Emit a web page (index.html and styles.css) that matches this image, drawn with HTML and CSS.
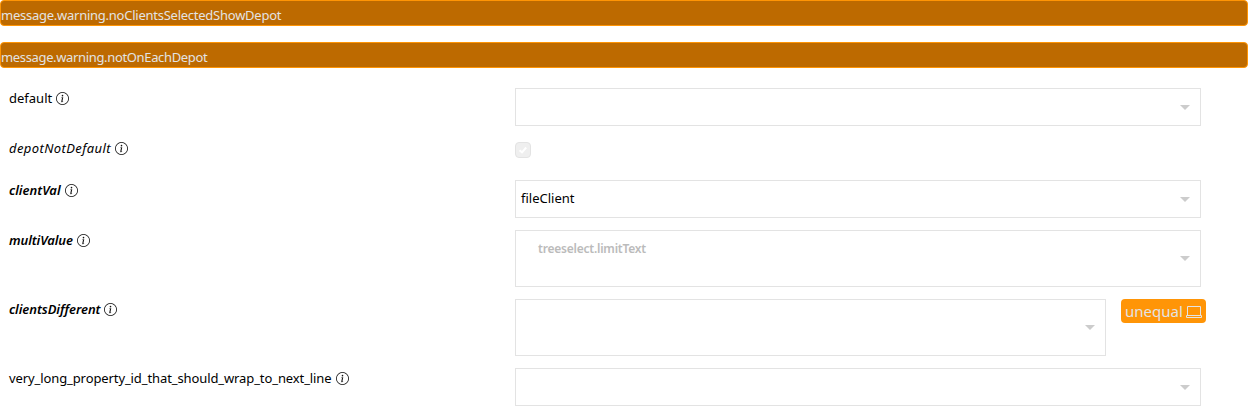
FILE: index.html
```
<!DOCTYPE html>
<html lang="en">
<head>
<meta charset="utf-8">
<title>Properties</title>
<link rel="stylesheet" href="styles.css">
</head>
<body>
<svg width="0" height="0" class="defs">
  <symbol id="info" viewBox="0 0 16 16">
    <path d="M8 15A7 7 0 1 1 8 1a7 7 0 0 1 0 14zm0 1A8 8 0 1 0 8 0a8 8 0 0 0 0 16z"/>
    <path d="m8.930 6.588-2.290.287-.082.380.450.083c.294.070.352.176.288.469l-.738 3.468c-.194.897.105 1.319.808 1.319.545 0 1.178-.252 1.465-.598l.088-.416c-.200.176-.492.246-.686.246-.275 0-.375-.193-.304-.533L8.930 6.588zM9 4.500a1 1 0 1 1-2 0 1 1 0 0 1 2 0z"/>
  </symbol>
</svg>
<div class="alert"><span class="msg-clients">message.warning.noClientsSelectedShowDepot</span></div>
<div class="alert"><span class="msg-depot">message.warning.notOnEachDepot</span></div>
<div class="table">
  <div class="row">
    <div class="label"><span class="name">default</span><svg class="info"><use href="#info"/></svg></div>
    <div class="select"><i class="arrow"></i></div>
  </div>
  <div class="row check-row">
    <div class="label"><span class="name changed">depotNotDefault</span><svg class="info"><use href="#info"/></svg></div>
    <div class="checkbox"><svg width="10" height="10" viewBox="0 0 10 10"><path d="M1.500 5.300 4 7.300 8.200 2.500"/></svg></div>
  </div>
  <div class="row">
    <div class="label"><span class="name client">clientVal</span><svg class="info"><use href="#info"/></svg></div>
    <div class="select"><span class="value">fileClient</span><i class="arrow"></i></div>
  </div>
  <div class="row">
    <div class="label"><span class="name client multi">multiValue</span><svg class="info"><use href="#info"/></svg></div>
    <div class="select tall"><span class="limit">treeselect.limitText</span><i class="arrow"></i></div>
  </div>
  <div class="row">
    <div class="label"><span class="name client different">clientsDifferent</span><svg class="info"><use href="#info"/></svg></div>
    <div class="select tall narrow"><i class="arrow"></i></div>
    <div class="badge"><span>unequal</span><svg width="16" height="14" viewBox="0 0 16 14"><path d="M1.500 10.500V1.500h13v9M.500 10.500h15v2h-15z"/></svg></div>
  </div>
  <div class="row">
    <div class="label"><span class="name long">very_long_property_id_that_should_wrap_to_next_line</span><svg class="info"><use href="#info"/></svg></div>
    <div class="select"><i class="arrow"></i></div>
  </div>
</div>
</body>
</html>
```
FILE: styles.css
```
* { box-sizing: border-box; }
body {
  margin: 0;
  overflow: hidden;
  background: #fff;
  color: #000;
  font: 13px/20px "Noto Sans", sans-serif;
}
svg { display: block; flex: none; }
.defs { display: none; }
.alert {
  height: 26px;
  margin-bottom: 16px;
  padding-top: 4px;
  border: 1px solid #ff9505;
  border-radius: 4px;
  background: #bd6a00;
  color: #e3e3e3;
  white-space: nowrap;
}
.msg-clients { letter-spacing: -0.25px; }
.msg-depot { letter-spacing: -0.35px; }
.table {
  display: flex;
  flex-direction: column;
  gap: 12px;
  margin-top: 20px;
  padding-left: 9px;
}
.row { display: flex; align-items: flex-start; }
.check-row { height: 30px; }
.label { display: flex; align-items: center; gap: 4px; width: 506px; flex: none; white-space: nowrap; }
.info { width: 13px; height: 13px; margin-top: 1px; fill: #111; }
.changed { font-style: italic; letter-spacing: 0.4px; }
.client { font-style: italic; font-weight: 600; }
.multi { letter-spacing: -0.1px; }
.different { letter-spacing: -0.06px; }
.long { letter-spacing: -0.1px; }
.select {
  display: flex;
  align-items: center;
  width: 686px;
  height: 38px;
  padding: 0 10.5px 0 5px;
  border: 1px solid #e3e3e3;
}
.tall { height: 57px; }
.narrow { width: 591px; }
.value { margin-top: -3px; }
.limit {
  align-self: flex-start;
  margin: 8px 0 0 17px;
  color: #bbb;
  font-size: 12px;
  font-weight: 600;
  letter-spacing: -0.22px;
}
.arrow {
  margin-left: auto;
  border: 5px solid transparent;
  border-top-color: #ccc;
  border-bottom: 0;
}
.checkbox {
  display: grid;
  place-items: center;
  width: 16px;
  height: 16px;
  margin-top: 4px;
  border: 1px solid #e3e3e3;
  border-radius: 4px;
  background: #efefef;
}
.checkbox path { fill: none; stroke: #fff; stroke-width: 2; }
.badge {
  display: flex;
  align-items: center;
  justify-content: space-between;
  width: 85px;
  height: 24px;
  margin-left: 15px;
  padding: 0 4px;
  border-radius: 4px;
  background: #ff9507;
  color: #e3e3e3;
  font-size: 15px;
}
.badge svg { margin-top: 2px; }
.badge path { fill: none; stroke: #e3e3e3; }
```
